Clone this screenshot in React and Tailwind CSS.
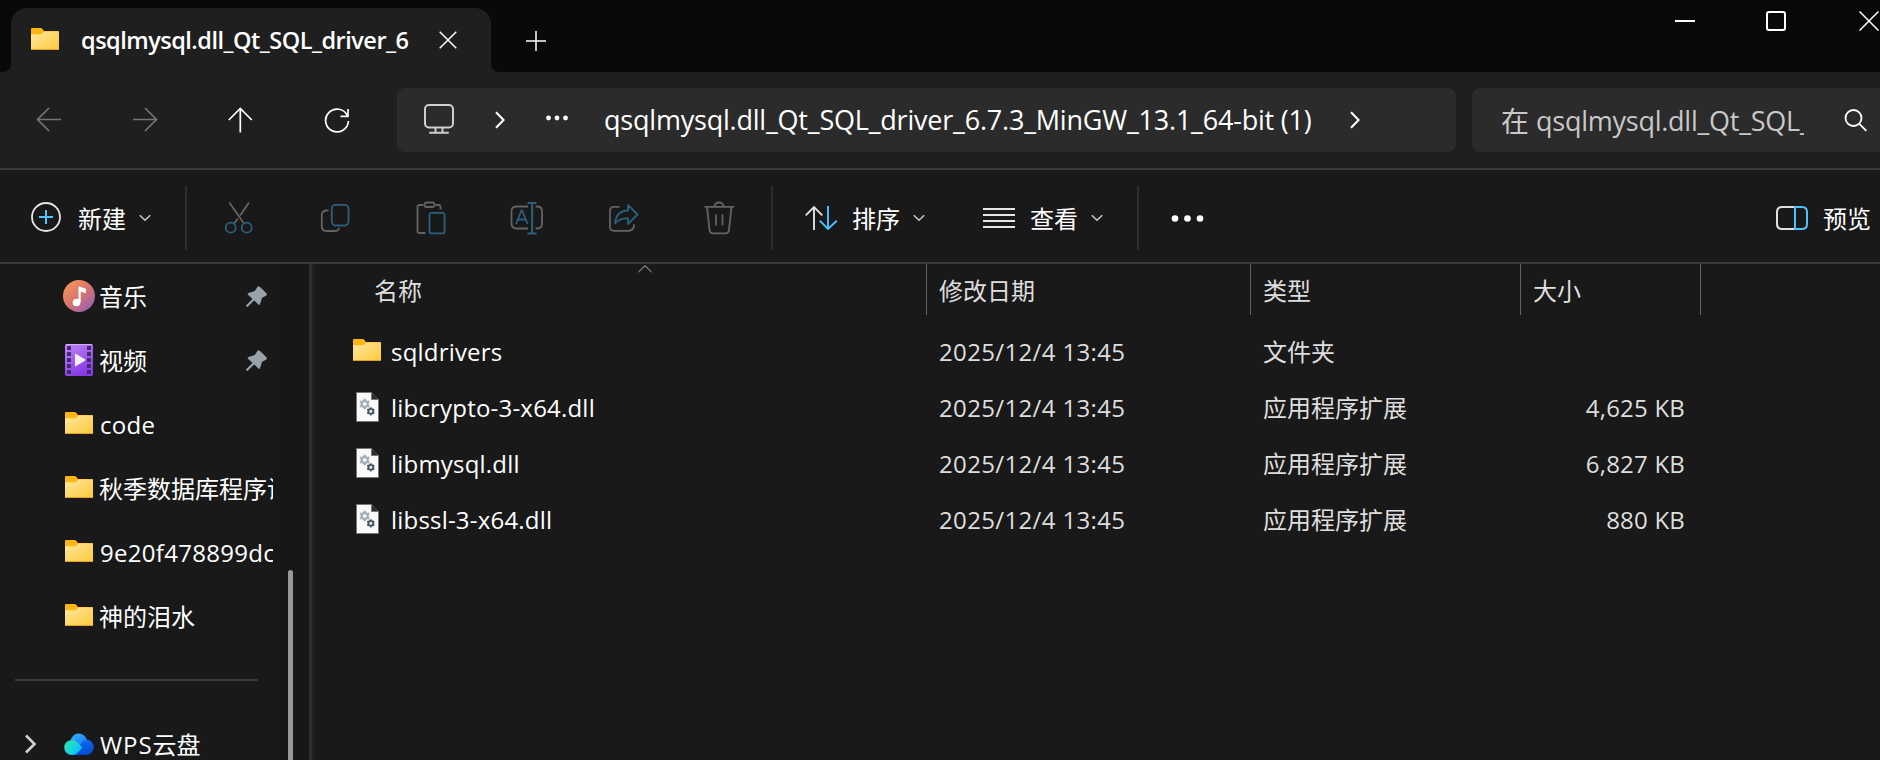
import React from 'react';

const commandIcons = ['cut', 'copy', 'paste', 'rename', 'share', 'trash'];

const pinned = [
  { icon: 'music', label: '音乐', pin: true },
  { icon: 'video', label: '视频', pin: true },
  { icon: 'folder', label: 'code', latin: true },
  { icon: 'folder', label: '秋季数据库程序设计' },
  { icon: 'folder', label: '9e20f478899dc', latin: true },
  { icon: 'folder', label: '神的泪水' },
];

const files = [
  { icon: 'folder', name: 'sqldrivers', date: '2025/12/4 13:45', type: '文件夹', size: '' },
  { icon: 'dll', name: 'libcrypto-3-x64.dll', date: '2025/12/4 13:45', type: '应用程序扩展', size: '4,625 KB' },
  { icon: 'dll', name: 'libmysql.dll', date: '2025/12/4 13:45', type: '应用程序扩展', size: '6,827 KB' },
  { icon: 'dll', name: 'libssl-3-x64.dll', date: '2025/12/4 13:45', type: '应用程序扩展', size: '880 KB' },
];

const FolderIcon = () => (
  <svg width="28" height="22" viewBox="0 0 28 22" className="shrink-0">
    <defs>
      <linearGradient id="folder" x1="0" y1="0" x2="1" y2="1">
        <stop offset="0" stopColor="#ffe8a3" />
        <stop offset="1" stopColor="#ffc938" />
      </linearGradient>
    </defs>
    <path d="M0 1q0-1 1-1h8.6q.8 0 1.400.6L13 3h14q1 0 1 1v16H0z" fill="#fcb614" />
    <path d="M0 6.200h9.500q.8 0 1.400-.500l1.800-1.700q.6-.5 1.400-.5H28V21q0 1-1 1H1q-1 0-1-1z" fill="url(#folder)" />
    <path d="M.5 21.500h27" stroke="#dfa32a" strokeWidth="1" />
  </svg>
);

const MusicIcon = () => (
  <svg width="32" height="32" viewBox="0 0 32 32">
    <defs>
      <linearGradient id="music" x1="0.1" y1="0.1" x2="0.85" y2="0.95">
        <stop offset="0" stopColor="#f5935a" />
        <stop offset="0.5" stopColor="#d8756f" />
        <stop offset="1" stopColor="#9760b4" />
      </linearGradient>
    </defs>
    <circle cx="16" cy="16" r="16" fill="url(#music)" />
    <circle cx="13.500" cy="22.500" r="3.800" fill="#fff" />
    <path d="M15.500 22.500V7.300q0-1 1-.7l5.700 2q.8.3.8 1v2.600q0 1-1 .7l-4.300-1.500v11z" fill="#fff" />
  </svg>
);

const VideoIcon = () => (
  <svg width="28" height="32" viewBox="0 0 28 32">
    <defs>
      <linearGradient id="video" x1="0" y1="0" x2="0.4" y2="1">
        <stop offset="0" stopColor="#bd86f6" />
        <stop offset="1" stopColor="#873be4" />
      </linearGradient>
    </defs>
    <rect width="28" height="32" rx="2" fill="url(#video)" />
    <path d="M1 .5h26" stroke="#d3adfa" />
    {[2, 8, 14, 20, 26].map((y) => (
      <g key={y} fill="#43276f">
        <rect x="2" y={y} width="4" height="4" rx="0.5" />
        <rect x="22" y={y} width="4" height="4" rx="0.5" />
      </g>
    ))}
    <path d="M10 10.200v11.600q0 .8.8.4l9.400-5.700q.6-.5 0-1l-9.400-5.700q-.8-.4-.8.400z" fill="#f2f0f5" />
  </svg>
);

const Gear = ({ cx, cy, r, color }) => (
  <g stroke={color} transform={`translate(${cx} ${cy})`}>
    <circle r={r * 0.58} fill="none" strokeWidth={r * 0.46} />
    {[0, 60, 120, 180, 240, 300].map((a) => (
      <path key={a} d={`M0 ${-r * 0.75}V${-r}`} strokeWidth={r * 0.45} transform={`rotate(${a})`} />
    ))}
  </g>
);

const DllIcon = () => (
  <svg width="23" height="30" viewBox="0 0 23 30" className="mt-0.5 ml-[3px] shrink-0">
    <path d="M.5.5h15L22.500 7.500v22H.5z" fill="#fafafa" stroke="#777" />
    <path d="M15.500.5v7h7" fill="#2b2b2b" stroke="#777" />
    <Gear cx={8.700} cy={12} r={5.300} color="#a3b0bc" />
    <Gear cx={14.800} cy={19.400} r={4.100} color="#4c545d" />
  </svg>
);

const PinIcon = () => (
  <svg width="21" height="21" viewBox="0 0 21 21">
    <path d="M11.200 1.200Q12.500-.4 14 .9l6.200 6.200q1.500 1.600-.2 2.700l-4 2-1.900 6.200q-.6 1.500-1.700.5L2 8.700q-.9-1 .4-1.600L8.800 5z" fill="#98a2a8" />
    <path d="M7.800 13.200L1.200 19.800" stroke="#98a2a8" strokeWidth="2.200" strokeLinecap="round" />
  </svg>
);

const CloudIcon = () => (
  <svg width="30" height="22" viewBox="0 0 30 22">
    <defs>
      <linearGradient id="cloudLeft" x1="0" y1="0" x2="1" y2="0.8">
        <stop offset="0" stopColor="#41e59c" />
        <stop offset="0.600" stopColor="#12d3e6" />
        <stop offset="1" stopColor="#05b4fb" />
      </linearGradient>
      <linearGradient id="cloudTop" x1="0" y1="0" x2="1" y2="1">
        <stop offset="0" stopColor="#35b6ff" />
        <stop offset="1" stopColor="#1377f5" />
      </linearGradient>
      <linearGradient id="cloudRight" x1="0" y1="0" x2="0" y2="1">
        <stop offset="0" stopColor="#0a6cf0" />
        <stop offset="1" stopColor="#0349cf" />
      </linearGradient>
    </defs>
    <path d="M22 6.500a7.700 7.700 0 0 1 0 15.500H9L17 9q2-2.500 5-2.500z" fill="url(#cloudRight)" />
    <path d="M6.800 7.200A8.200 8.200 0 0 1 22.800 6.700q-3 .3-5.200 3l-3 3.500z" fill="url(#cloudTop)" />
    <path d="M7.500 7q4 0 6 2.600l4.800 4.900-4.400 4.900Q11.700 22 8 22A7.500 7.500 0 0 1 7.500 7z" fill="url(#cloudLeft)" />
  </svg>
);

const itemIcons = {
  folder: <FolderIcon />,
  music: <MusicIcon />,
  video: <VideoIcon />,
  dll: <DllIcon />,
};

const CommandIcon = ({ name }) => {
  const gray = '#636363';
  const blue = '#2b5f7c';
  const shapes = {
    cut: (
      <>
        <path d="M6.800 1.500L21.500 22.500M26.500 1.500L17.600 14.500M15.300 17.600L11.600 22.500" stroke={gray} />
        <circle cx="8.200" cy="26.700" r="5" stroke={blue} />
        <circle cx="24.200" cy="26.700" r="5" stroke={blue} />
      </>
    ),
    copy: (
      <>
        <path d="M10 9.500H8.500Q3.300 9.500 3.300 14v11.500q0 4.500 4.500 4.500H16q4 0 4.800-3" stroke={gray} />
        <rect x="13.300" y="3.800" width="16.700" height="20.700" rx="4" stroke={blue} />
      </>
    ),
    paste: (
      <>
        <path d="M9 4H5q-2 0-2 2v24q0 2 2 2h6M21 4h3q2 0 2 2v2.500" stroke={gray} />
        <rect x="10" y="1.500" width="10" height="4.500" rx="2" stroke={gray} />
        <rect x="15" y="11.800" width="15" height="20.500" rx="2" stroke={blue} />
      </>
    ),
    rename: (
      <>
        <path d="M17.500 5.500H6q-5 0-5 5v12q0 5 5 5H17.500M25 5.500h1.500q5 0 5 5v12q0 5-5 5H25" stroke={gray} />
        <path d="M5.500 23l5.500-13.500h.6l5.500 13.500M7.500 18.500h7.700" stroke={blue} />
        <path d="M17 2h9M17 32.500h9M21.600 2v30.500" stroke={blue} strokeWidth="2" />
      </>
    ),
    share: (
      <>
        <path d="M13 5.800H7.500q-4 0-4 4v16q0 4 4 4h14q5 0 6-4.500v-2" stroke={gray} />
        <path d="M21.500 4L31 13.500l-9.500 9.500v-5.500q-8-.5-13 5Q9.500 10 21.500 9.500z" stroke={blue} strokeLinejoin="round" />
      </>
    ),
    trash: (
      <>
        <path d="M2 5.800h29.500M4.500 5.800l2.600 23.500q.4 3 3.400 3h12.500q3 0 3.400-3L29 5.800" stroke={gray} />
        <path d="M12 5.500Q12.500 1.500 16.500 1.500T21 5.500M13.500 13.500v11M20 13.500v11" stroke={gray} />
      </>
    ),
  };
  return (
    <svg width="34" height="34" viewBox="-0.5 0 34 34" fill="none" strokeWidth="1.800">
      {shapes[name]}
    </svg>
  );
};

const ChevronDown = () => (
  <svg width="12" height="8" viewBox="0 0 12 8" fill="none" stroke="#c8c8c8" strokeWidth="1.500">
    <path d="M.8 1.200L6 6.300l5.200-5.100" />
  </svg>
);

const ChevronRight = () => (
  <svg width="10" height="18" viewBox="0 0 10 18" fill="none" stroke="#fff" strokeWidth="2">
    <path d="M1 1.200L8.600 9 1 16.800" />
  </svg>
);

const Divider = () => <div className="h-16 w-0.5 shrink-0 bg-[#2d2d2d]" />;

const TitleBar = () => (
  <header className="flex h-[72px] items-start bg-[#090909]">
    <div className="flex h-full w-[11px] items-end bg-[#1f1f1f]">
      <div className="h-full w-full rounded-br-lg bg-[#090909]" />
    </div>
    <div className="h-full w-[480px] pt-2">
      <div className="flex h-16 items-center rounded-t-2xl bg-[#1f1f1f] pl-5">
        <div className="pb-0.5">
          <FolderIcon />
        </div>
        <div className="mt-0.5 ml-[22px] w-[331px] overflow-hidden text-[23.5px] font-semibold tracking-[-0.5px] whitespace-nowrap text-white">
          qsqlmysql.dll_Qt_SQL_driver_6
        </div>
        <svg width="18" height="18" viewBox="0 0 18 18" stroke="#fff" strokeWidth="1.500" className="mb-px ml-[27px]">
          <path d="M.7.7l16.600 16.600M17.300.7L.7 17.300" />
        </svg>
      </div>
    </div>
    <div className="h-full flex-1 bg-[#1f1f1f]">
      <div className="flex h-full justify-between rounded-bl-lg bg-[#090909]">
        <svg width="20" height="20" viewBox="0 0 20 20" stroke="#fff" strokeWidth="1.500" className="mt-[31px] ml-[35px]">
          <path d="M10 0v20M0 10h20" />
        </svg>
        <div className="mt-[11px] flex gap-[71px] pr-px">
          <svg width="20" height="20" viewBox="0 0 20 20" stroke="#fff" strokeWidth="2">
            <path d="M0 10h20" />
          </svg>
          <svg width="20" height="20" viewBox="0 0 20 20" fill="none" stroke="#fff" strokeWidth="2">
            <rect x="1" y="1" width="18" height="18" rx="2" />
          </svg>
          <svg width="20" height="20" viewBox="0 0 20 20" stroke="#fff" strokeWidth="1.500" className="ml-0.5">
            <path d="M.5.5l19 19M19.500.5L.5 19.500" />
          </svg>
        </div>
      </div>
    </div>
  </header>
);

const navPaths = [
  { d: 'M25 12.500H1M13 1L1.500 12.500 13 24', color: '#747474' },
  { d: 'M1 12.500h24M13 1L24.500 12.500 13 24', color: '#747474' },
  { d: 'M12.300 1.500v24M.8 13L12.300 1.500l11.500 11.500', color: '#fff' },
  { d: 'M23.500 9A11.400 11.400 0 1 0 24.400 14M24 2v7.300h-7.500', color: '#fff' },
];

const AddressRow = () => (
  <div className="flex h-24 items-center bg-[#1f1f1f]">
    <div className="flex w-[397px] shrink-0 pl-px">
      {navPaths.map((nav) => (
        <div key={nav.d} className="flex w-24 justify-center">
          <svg width="26" height="26" viewBox="0 0 26 26" fill="none" stroke={nav.color} strokeWidth="1.700">
            <path d={nav.d} />
          </svg>
        </div>
      ))}
    </div>
    <div className="flex h-16 w-[1059px] shrink-0 items-center rounded-lg bg-[#2b2b2b] pl-[27px]">
      <svg width="30" height="30" viewBox="0 0 30 30" fill="none" stroke="#cfcfcf" strokeWidth="2" className="mb-0.5">
        <rect x="1" y="1" width="28" height="22.500" rx="4" />
        <path d="M11.500 24v4M18.500 24v4M6 28.700h18" strokeLinecap="round" />
      </svg>
      <div className="ml-[41px]">
        <ChevronRight />
      </div>
      <svg width="24" height="6" viewBox="0 0 24 6" fill="#fff" className="mb-1 ml-[40px]">
        <circle cx="3.500" cy="3" r="2.400" />
        <circle cx="12" cy="3" r="2.400" />
        <circle cx="20.500" cy="3" r="2.400" />
      </svg>
      <div className="ml-[35px] w-[710px] text-[27px] tracking-[-0.21px] whitespace-nowrap text-white">
        qsqlmysql.dll_Qt_SQL_driver_6.7.3_MinGW_13.1_64-bit (1)
      </div>
      <div className="ml-[36px]">
        <ChevronRight />
      </div>
    </div>
    <div className="ml-4 flex h-16 flex-1 items-center rounded-l-lg bg-[#2b2b2b] pl-[29px] text-[#c8c8c8]">
      <div className="mt-0.5 flex w-[303px] items-center overflow-hidden whitespace-nowrap">
        <span className="text-[28px]">在</span>
        <span className="ml-[7px] text-[27px] tracking-[-0.25px]">qsqlmysql.dll_Qt_SQL_driver</span>
      </div>
      <svg width="24" height="24" viewBox="0 0 24 24" fill="none" stroke="#fff" strokeWidth="1.800" className="ml-10">
        <circle cx="9.500" cy="10" r="8" />
        <path d="M15.300 15.800l7 7" />
      </svg>
    </div>
  </div>
);

const CommandBar = () => (
  <div className="flex h-24 items-center border-y-2 border-[#3a3a3a] bg-[#191919] pt-1 text-2xl text-white">
    <div className="flex w-[185px] items-center pl-[31px]">
      <svg width="30" height="30" viewBox="0 0 30 30" fill="none" strokeWidth="1.800" className="mb-0.5">
        <circle cx="15" cy="15" r="14" stroke="#e6e6e6" />
        <path d="M15 8v14M8 15h14" stroke="#4cc2ff" strokeWidth="2" />
      </svg>
      <span className="mt-0.5 ml-[17px]">新建</span>
      <div className="ml-[13px]">
        <ChevronDown />
      </div>
    </div>
    <Divider />
    <div className="flex w-[584px] pl-1">
      {commandIcons.map((name) => (
        <div key={name} className="flex w-24 justify-center">
          <CommandIcon name={name} />
        </div>
      ))}
    </div>
    <Divider />
    <div className="flex w-[364px] items-center pl-8">
      <svg width="33" height="26" viewBox="0 0 33 26" fill="none" strokeWidth="1.900">
        <path d="M9 25V2M.7 10.300L9 2l8.300 8.300" stroke="#e0e0e0" />
        <path d="M23 1v23M14.700 15.700L23 24l8.800-8.300" stroke="#4cc2ff" />
      </svg>
      <span className="mt-0.5 ml-[14px]">排序</span>
      <div className="ml-[13px]">
        <ChevronDown />
      </div>
      <svg width="32" height="20" viewBox="0 0 32 20" stroke="#e6e6e6" strokeWidth="2" className="ml-[58px]">
        <path d="M0 1h32M0 7h32M0 13h32M0 19h32" />
      </svg>
      <span className="mt-0.5 ml-[15px]">查看</span>
      <div className="ml-[13px]">
        <ChevronDown />
      </div>
    </div>
    <Divider />
    <svg width="34" height="8" viewBox="0 0 34 8" fill="#fff" className="mt-px ml-8">
      <circle cx="4" cy="3.500" r="3.300" />
      <circle cx="16.500" cy="3.500" r="3.300" />
      <circle cx="29" cy="3.500" r="3.300" />
    </svg>
    <div className="ml-auto flex items-center pr-[9px]">
      <svg width="32" height="24" viewBox="0 0 32 24" fill="none" strokeWidth="2">
        <path d="M19 1H6Q1 1 1 6v12q0 5 5 5h13" stroke="#e0e0e0" />
        <path d="M19 1h7q5 0 5 5v12q0 5-5 5h-7z" stroke="#4cc2ff" />
      </svg>
      <span className="mt-0.5 ml-[15px]">预览</span>
    </div>
  </div>
);

const Sidebar = () => (
  <aside className="flex w-[315px] shrink-0 text-white">
    <div className="w-[273px] overflow-hidden">
      {pinned.map((item) => (
        <div key={item.label} className="flex h-16 items-center">
          <div className={`ml-[63px] flex w-8 shrink-0 justify-center ${item.icon === 'folder' ? 'mb-0.5' : ''}`}>
            {itemIcons[item.icon]}
          </div>
          <span className={`mt-0.5 whitespace-nowrap ${item.latin ? 'ml-[5px] text-2xl tracking-[0.3px]' : 'ml-1 text-2xl'}`}>
            {item.label}
          </span>
          {item.pin && (
            <div className="mr-[6px] ml-auto">
              <PinIcon />
            </div>
          )}
        </div>
      ))}
      <div className="flex h-16 items-center pl-[15px]">
        <div className="h-0.5 w-[243px] bg-[#3a3a3a]" />
      </div>
      <div className="flex h-16 items-center">
        <svg width="12" height="20" viewBox="0 0 12 20" fill="none" stroke="#d0d0d0" strokeWidth="2.600" className="ml-[25px]">
          <path d="M1 1.500L9.500 10 1 18.500" />
        </svg>
        <div className="ml-[27px]">
          <CloudIcon />
        </div>
        <span className="mt-0.5 ml-[6px] flex items-center whitespace-nowrap">
          <span className="text-2xl tracking-[0.9px]">WPS</span>
          <span className="text-2xl">云盘</span>
        </span>
      </div>
    </div>
    <div className="flex w-9 flex-col bg-[#171717] pt-[306px] pl-[15px]">
      <div className="w-[5px] flex-1 rounded-t-full bg-[#999]" />
    </div>
    <div className="w-[3px] bg-[#2d2d2d]" />
    <div className="w-[3px] bg-[#1f1f1f]" />
  </aside>
);

const FileList = () => (
  <main className="flex-1">
    <div className="relative flex h-[51px] items-center text-2xl text-[#dedede]">
      <svg width="14" height="8" viewBox="0 0 14 8" fill="none" stroke="#bdbdbd" className="absolute top-px left-[323px]">
        <path d="M.5 7L7 .7 13.500 7" />
      </svg>
      <div className="flex h-full w-[612px] items-center border-r border-[#636363] pt-0.5 pl-[59px]">名称</div>
      <div className="flex h-full w-[324px] items-center border-r border-[#636363] pt-0.5 pl-3">修改日期</div>
      <div className="flex h-full w-[270px] items-center border-r border-[#636363] pt-0.5 pl-3">类型</div>
      <div className="flex h-full w-[180px] items-center border-r border-[#636363] pt-0.5 pl-3">大小</div>
    </div>
    <div className="pt-[7px] text-2xl text-[#dedede]">
      {files.map((file) => (
        <div key={file.name} className="flex h-14 items-center">
          <div className="flex w-[612px] items-center pl-[38px]">
            <div className="w-[38px] shrink-0">{itemIcons[file.icon]}</div>
            <span className="mt-1 tracking-[0.2px] text-white">{file.name}</span>
          </div>
          <div className="mt-1 w-[324px] pl-3 tracking-[0.35px]">{file.date}</div>
          <div className="mt-1 w-[270px] pl-3">{file.type}</div>
          <div className="mt-1 w-[180px] pr-4 text-right tracking-[0.2px]">{file.size}</div>
        </div>
      ))}
    </div>
  </main>
);

export default function App() {
  return (
    <div className="flex h-[760px] w-[1880px] flex-col overflow-hidden bg-[#191919] font-['Open_Sans','Noto_Sans_CJK_SC',sans-serif]">
      <TitleBar />
      <AddressRow />
      <CommandBar />
      <div className="flex min-h-0 flex-1 overflow-hidden">
        <Sidebar />
        <FileList />
      </div>
    </div>
  );
}
